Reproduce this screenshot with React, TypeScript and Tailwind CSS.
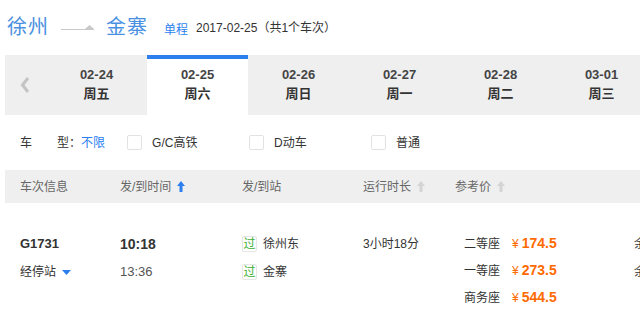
const font = { fontFamily: '"Liberation Sans", "Noto Sans CJK SC", sans-serif' };

const dates = [
  { d: '02-24', w: '周五' },
  { d: '02-25', w: '周六', active: true },
  { d: '02-26', w: '周日' },
  { d: '02-27', w: '周一' },
  { d: '02-28', w: '周二' },
  { d: '03-01', w: '周三' },
];

const seats = [
  { name: '二等座', price: '174.5' },
  { name: '一等座', price: '273.5' },
  { name: '商务座', price: '544.5' },
];

function SortArrow({ active }: { active?: boolean }) {
  return (
    <svg width="8" height="11" viewBox="0 0 8 11" className="ml-[6px]">
      <path d="M4 0 L8 5 H5.5 V11 H2.5 V5 H0 Z" fill={active ? '#2d7ff0' : '#d4d4d4'} />
    </svg>
  );
}

function Check({ label }: { label: string }) {
  return (
    <div className="flex items-center">
      <span className="w-[15px] h-[15px] border border-[#e2e2e2] rounded-[2px] bg-white" />
      <span className="ml-[10px]">{label}</span>
    </div>
  );
}

function Badge() {
  return (
    <span className="w-[15px] h-[16px] flex items-center justify-center border border-[#e6e6e6] rounded-[2px] text-[12px] text-[#3cb034] leading-none">
      过
    </span>
  );
}

export default function App() {
  return (
    <div className="w-[640px] h-[332px] overflow-hidden bg-white text-[#333]" style={font}>
      <div className="h-[55px] flex items-center pl-[7px] pb-[2px]">
        <span className="text-[20px] text-[#4a90e2] tracking-[1px]">徐州</span>
        <svg width="34" height="8" viewBox="0 0 34 8" className="ml-[12px] mr-[11px]">
          <path d="M0 6.5 H33" stroke="#c8c8c8" strokeWidth="1" />
          <path d="M24 6 L28.5 2 L33 6 Z" fill="#c8c8c8" />
        </svg>
        <span className="text-[20px] text-[#4a90e2] tracking-[1px]">金寨</span>
        <span className="ml-[16px] mt-[6px] text-[12px] text-[#2d7ff0]">单程</span>
        <span className="ml-[8px] mt-[2px] text-[12px] text-[#333]">2017-02-25（共1个车次）</span>
      </div>

      <div className="ml-[5px] w-[700px] h-[60px] bg-[#efefef] flex">
        <div className="w-[41px] shrink-0 flex items-center justify-center pr-[2px]">
          <svg width="10" height="18" viewBox="0 0 10 18">
            <path d="M8 2 L2.5 9 L8 16" stroke="#c4c4c4" strokeWidth="3" fill="none" />
          </svg>
        </div>
        {dates.map((x) => (
          <div
            key={x.d}
            className={
              'w-[101px] shrink-0 flex flex-col items-center pt-[7px] ' +
              (x.active ? 'bg-white border-t-[4px] border-[#2d7ff0]' : 'border-t-[4px] border-transparent')
            }
          >
            <span className="text-[13px] font-bold text-[#444] leading-[18px]">{x.d}</span>
            <span className="text-[13px] font-bold text-[#333] leading-[18px]" style={{ fontFamily: '"Noto Sans CJK SC", sans-serif' }}>{x.w}</span>
          </div>
        ))}
      </div>

      <div className="h-[55px] flex items-center pl-[20px] text-[12px] text-[#333]">
        <span>车</span>
        <span className="ml-[25px]">型：</span>
        <span className="text-[#2d7ff0]">不限</span>
        <div className="ml-[22px] w-[122px] shrink-0"><Check label="G/C高铁" /></div>
        <div className="w-[122px] shrink-0"><Check label="D动车" /></div>
        <Check label="普通" />
      </div>

      <div className="ml-[5px] w-[700px] h-[33px] bg-[#efefef] flex items-center pl-[15px] text-[12px] text-[#666]">
        <div className="w-[100px] shrink-0">车次信息</div>
        <div className="w-[122px] shrink-0 flex items-center">发/到时间<SortArrow active /></div>
        <div className="w-[121px] shrink-0">发/到站</div>
        <div className="w-[92px] shrink-0 flex items-center">运行时长<SortArrow /></div>
        <div className="flex items-center">参考价<SortArrow /></div>
      </div>

      <div className="flex w-[700px] pl-[20px] pt-[27px] text-[12px] text-[#333] whitespace-nowrap">
        <div className="w-[100px] shrink-0 flex flex-col">
          <span className="h-[28px] leading-[28px] text-[13px] font-bold">G1731</span>
          <span className="h-[28px] flex items-center">
            经停站
            <svg width="9" height="5" viewBox="0 0 9 5" className="ml-[6px]">
              <path d="M0 0 H9 L4.5 5 Z" fill="#2d7ff0" />
            </svg>
          </span>
        </div>
        <div className="w-[122px] shrink-0 flex flex-col">
          <span className="h-[28px] leading-[28px] text-[14px] font-bold">10:18</span>
          <span className="h-[28px] leading-[28px] text-[13px] text-[#555]">13:36</span>
        </div>
        <div className="w-[121px] shrink-0 flex flex-col">
          <span className="h-[28px] flex items-center gap-[6px]"><Badge />徐州东</span>
          <span className="h-[28px] flex items-center gap-[6px]"><Badge />金寨</span>
        </div>
        <div className="w-[101px] shrink-0">
          <span className="block h-[28px] leading-[28px]">3小时18分</span>
        </div>
        <div className="w-[170px] shrink-0 flex flex-col">
          {seats.map((s) => (
            <div key={s.name} className="h-[27px] flex items-center">
              <span className="w-[48px]">{s.name}</span>
              <span className="text-[#ff6a00] text-[12px]">¥</span>
              <span className="ml-[3px] text-[#ff6a00] text-[14px] font-bold">{s.price}</span>
            </div>
          ))}
        </div>
        <div className="shrink-0 flex flex-col">
          <span className="h-[28px] leading-[28px]">余票</span>
          <span className="h-[28px] leading-[28px]">余票</span>
        </div>
      </div>
    </div>
  );
}
